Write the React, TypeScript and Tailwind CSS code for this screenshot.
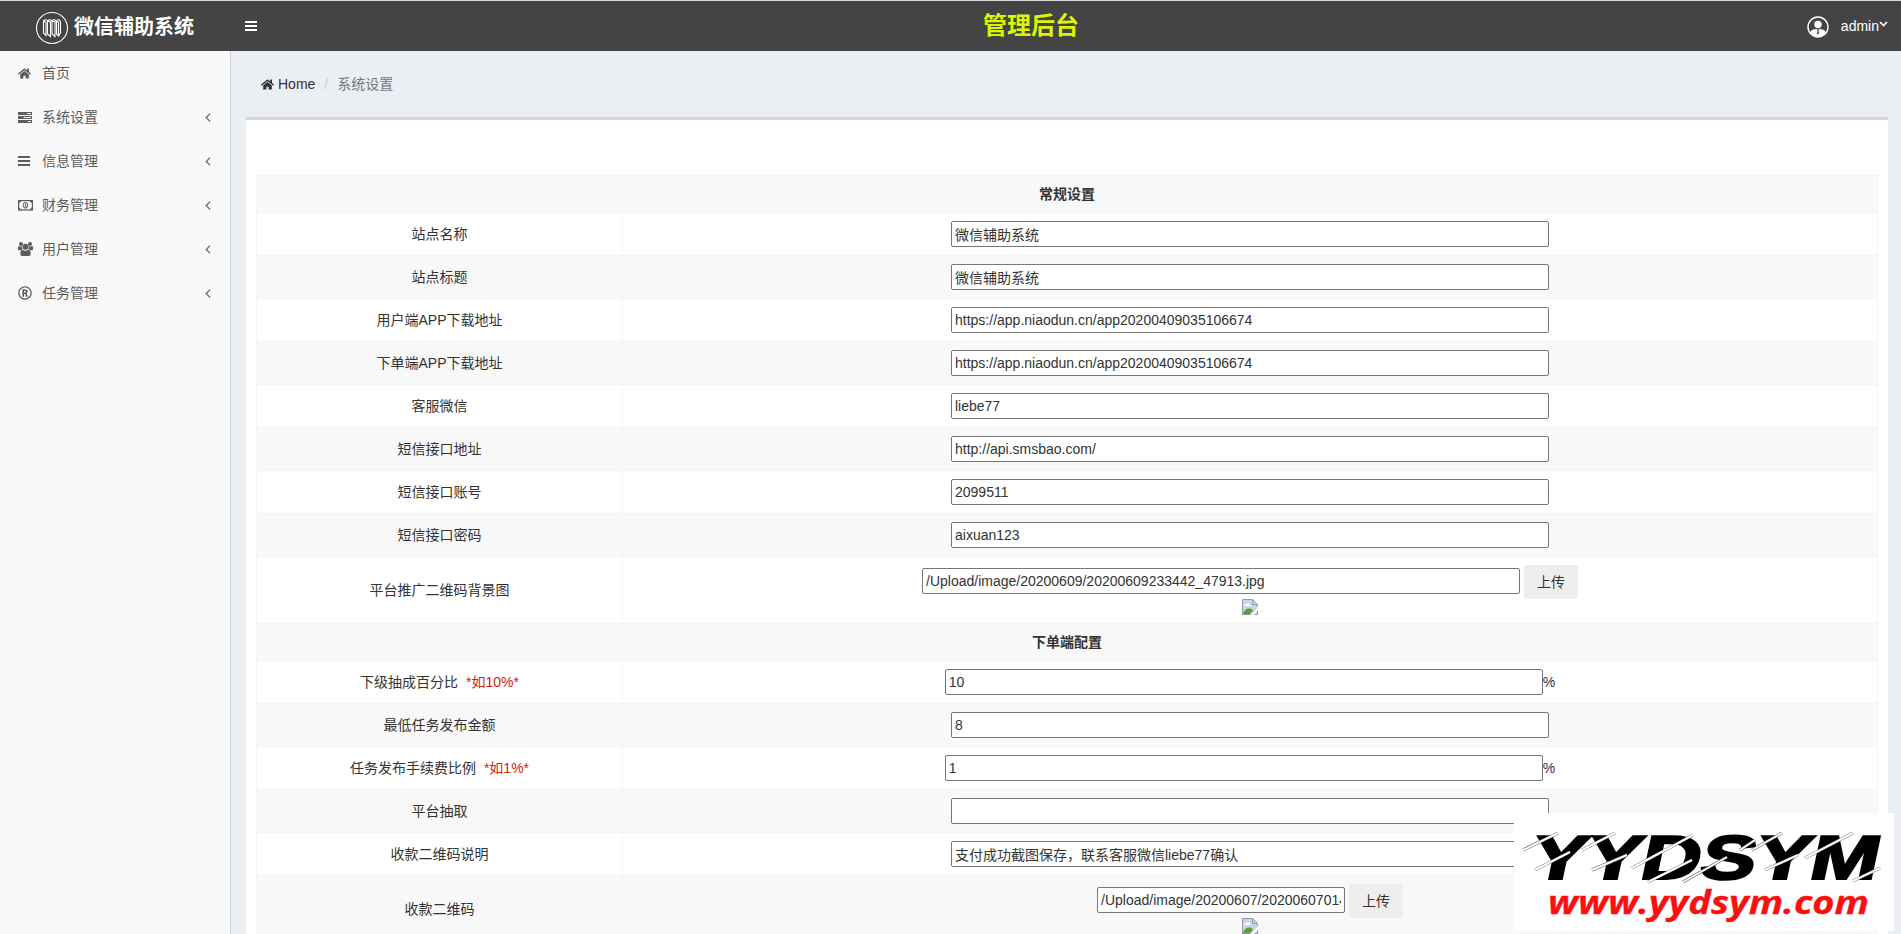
import { FaHome, FaRegRegistered } from "react-icons/fa";
import { ReactNode } from "react";

export type MenuEntry = {
    name: string;
    icon: ReactNode;
    children: boolean;
}

export type SettingRow = {
    label: string;
    hint?: string;
    value?: string;
    kind: "title" | "text" | "percent" | "upload" | "uploadSmall";
}

function BarsIcon() {
    return (
        <svg width="12" height="10" viewBox="0 0 12 10" fill="currentColor">
            <path d="M0 0h12v2H0zM0 4h12v2H0zM0 8h12v2H0z"/>
        </svg>
    );
}

function TasksIcon() {
    return (
        <svg width="14" height="11" viewBox="0 0 14 11" fill="currentColor">
            <path d="M0 0h14v3H0zM0 4h14v3H0zM0 8h14v3H0z"/>
            <path d="M9 1h4v1H9zM5.500 5H13v1H5.500zM10 9h3v1h-3z" fill="#f9f9f9"/>
        </svg>
    );
}

function MoneyIcon() {
    return (
        <svg width="15" height="11" viewBox="0 0 15 11" fill="none" stroke="currentColor">
            <rect x="0.6" y="0.6" width="13.8" height="9.4" strokeWidth="1.2"/>
            <path d="M1 1h2L1 3zM12 1h2v2zM1 9.600V7.600l2 2zM14 9.600h-2l2-2z" fill="currentColor" strokeWidth="0.6"/>
            <ellipse cx="7.5" cy="5.3" rx="2.3" ry="2.9"/>
            <path d="M6.800 4.300l.8-.5v3M6.500 6.900h2.200" strokeWidth="0.9"/>
        </svg>
    );
}

function GroupIcon() {
    return (
        <svg width="15" height="14" viewBox="0 0 15 14" fill="currentColor">
            <circle cx="3" cy="2" r="2"/>
            <circle cx="12" cy="2" r="2"/>
            <path d="M0 7.500V5.500q0-1.600 1-1.600 1.800 1 3 .4-.2 2 .9 2.900-1.300 0-2 1H1q-1 0-1-.7zM15 7.500V5.500q0-1.600-1-1.600-1.800 1-3 .4.2 2-.9 2.900 1.300 0 2 1H14q1 0 1-.7z"/>
            <circle cx="7.5" cy="4.800" r="3"/>
            <path d="M2.300 12q0-4.300 2.200-4.300 3 2 6 0 2.200 0 2.200 4.300 0 2-1.800 2H4.100q-1.800 0-1.800-2z"/>
        </svg>
    );
}

function AngleIcon() {
    return (
        <svg width="6" height="9" viewBox="0 0 6 9" fill="none" stroke="currentColor" strokeWidth="1.1">
            <path d="M5 .7L1.200 4.500 5 8.300"/>
        </svg>
    );
}

const menu: MenuEntry[] = [
    {name: "首页", icon: <FaHome size={13}/>, children: false},
    {name: "系统设置", icon: <TasksIcon/>, children: true},
    {name: "信息管理", icon: <BarsIcon/>, children: true},
    {name: "财务管理", icon: <MoneyIcon/>, children: true},
    {name: "用户管理", icon: <GroupIcon/>, children: true},
    {name: "任务管理", icon: <FaRegRegistered size={14}/>, children: true},
];

const rows: SettingRow[] = [
    {label: "常规设置", kind: "title"},
    {label: "站点名称", value: "微信辅助系统", kind: "text"},
    {label: "站点标题", value: "微信辅助系统", kind: "text"},
    {label: "用户端APP下载地址", value: "https://app.niaodun.cn/app20200409035106674", kind: "text"},
    {label: "下单端APP下载地址", value: "https://app.niaodun.cn/app20200409035106674", kind: "text"},
    {label: "客服微信", value: "liebe77", kind: "text"},
    {label: "短信接口地址", value: "http://api.smsbao.com/", kind: "text"},
    {label: "短信接口账号", value: "2099511", kind: "text"},
    {label: "短信接口密码", value: "aixuan123", kind: "text"},
    {label: "平台推广二维码背景图", value: "/Upload/image/20200609/20200609233442_47913.jpg", kind: "upload"},
    {label: "下单端配置", kind: "title"},
    {label: "下级抽成百分比", hint: "*如10%*", value: "10", kind: "percent"},
    {label: "最低任务发布金额", value: "8", kind: "text"},
    {label: "任务发布手续费比例", hint: "*如1%*", value: "1", kind: "percent"},
    {label: "平台抽取", value: "", kind: "text"},
    {label: "收款二维码说明", value: "支付成功截图保存，联系客服微信liebe77确认", kind: "text"},
    {label: "收款二维码", value: "/Upload/image/20200607/20200607014512_83120.jpg", kind: "uploadSmall"},
];

function BrokenImage() {
    return (
        <svg width="16" height="16" viewBox="0 0 16 16" className="block">
            <path d="M0.500 0.500h10l5 5v10H.5z" fill="#c3d6ee"/>
            <path d="M2 7c0-2 2-2 2.500-1.500C5 3.500 8 4 8 6c1 0 1 1 .5 1z" fill="#fff"/>
            <path d="M1 15c1-4 4-6 7-5.500 2 .5 3 2 3 2L8 15z" fill="#5aa02c"/>
            <path d="M.5 16V.5h10l5 5V8M10.500.5v5h5M.5 15.500h8M12.500 15.500h3V12" fill="none" stroke="#9a9a9a"/>
            <path d="M16 8.500L9 16h2.500l4.500-4.500z" fill="#fff"/>
        </svg>
    );
}

function Field({row}: { row: SettingRow }) {
    const box = "h-[26px] rounded-[2px] border border-[#767676] bg-white px-[3px] text-sm text-[#333] outline-none";

    if (row.kind === "upload" || row.kind === "uploadSmall") {
        return (
            <div className="flex flex-col items-center">
                <div className="flex gap-1">
                    <input
                        className={`${box} mt-[3px] ${row.kind === "upload" ? "w-[598px]" : "w-[248px]"}`}
                        defaultValue={row.value}
                    />
                    <button className="h-[34px] w-[54px] rounded-[3px] bg-[#eee] text-sm text-[#333]">上传</button>
                </div>
                <BrokenImage/>
            </div>
        );
    }
    return (
        <div className="flex items-center justify-center">
            <input className={`${box} w-[598px]`} defaultValue={row.value}/>
            {row.kind === "percent" && <span>%</span>}
        </div>
    );
}

function SettingLine({row, striped}: { row: SettingRow, striped: boolean }) {
    const bg = striped ? "bg-[#f8f8f8]" : "bg-white";

    if (row.kind === "title") {
        return (
            <div className={`flex h-[37px] items-center justify-center border-t border-[#f4f4f4] font-bold ${bg}`}>
                {row.label}
            </div>
        );
    }
    const height = row.kind === "text" || row.kind === "percent" ? "h-[43px]" : "h-[67px]";
    return (
        <div className={`flex border-t border-[#f4f4f4] ${height} ${bg}`}>
            <div className="flex w-[365px] items-center justify-center">
                {row.label}
                {row.hint && <span className="ml-2 text-[#d3200f]">{row.hint}</span>}
            </div>
            <div className="flex-1 border-l border-[#f4f4f4] pt-2">
                <Field row={row}/>
            </div>
        </div>
    );
}

function Header() {
    return (
        <div className="relative flex h-[51px] items-center border-t border-[#d3d8d6] bg-[#444] text-white">
            <div className="flex w-[230px] items-center gap-[5px] pl-[35px]">
                <svg width="34" height="34" viewBox="0 0 34 34" fill="none" stroke="#fff" className="mt-[3px]">
                    <circle cx="17" cy="17" r="15.500" strokeWidth="1.1"/>
                    {/* four folded strips that form the emblem */}
                    <path
                        d="M8.500 10V22l2.500 2.500V11.500zq2-2.500 4 0M12.500 10V23l3 2.500V11zq2-2.500 4 0M17 10V23l3 2.500V11zq2-2.500 4 0M21.500 10V23l2 2V11zM22 9q3-1 3.500 2V22L23.500 25"
                        strokeWidth="1.1"
                    />
                </svg>
                <span className="mt-[2px] text-xl font-bold leading-none">微信辅助系统</span>
            </div>
            <div className="ml-[15px]"><BarsIcon/></div>
            <div className="absolute left-[983px] top-[9px] text-2xl font-bold leading-8 text-[#dcf406]">管理后台</div>
            <div className="ml-auto flex items-center pr-[13px]">
                <svg width="22" height="22" viewBox="0 0 22 22" className="mt-[2px]">
                    <circle cx="11" cy="11" r="10" fill="none" stroke="#fff" strokeWidth="1.4"/>
                    <circle cx="11" cy="8.500" r="3.700" fill="#fff"/>
                    <path d="M3 16.500c1-3 4-3.200 6-3.500l2 .8 2-.8c2 .3 5 .5 6 3.500-2 3.500-5 4.500-8 4.500s-6-1-8-4.500z" fill="#fff"/>
                    <path d="M10 13.500h2l-.5 1.200.5 2.800-1 1-1-1 .5-2.800z" fill="#444"/>
                </svg>
                <span className="ml-3 text-sm">admin</span>
                <svg width="9" height="6" viewBox="0 0 9 6" className="mb-[5px]" fill="none" stroke="#fff" strokeWidth="1.600">
                    <path d="M1 1l3.500 3.500L8 1"/>
                </svg>
            </div>
        </div>
    );
}

// slash marks that cut through the letters
const slashes = "M9 37L44 20M21 57L56 39M68 37L101 20M78 57L113 42M118 55L179 22M134 69L178 47M169 69L213 44M226 37L241 27M238 37L268 20M251 57L284 42M291 45L339 20M339 68L366 55";

function Watermark() {
    return (
        <div className="absolute left-[1514px] top-[813px] h-[118px] w-[380px] bg-white">
            <svg width="380" height="118" viewBox="0 0 380 118">
                <text x="12" y="0" textLength="348" lengthAdjust="spacingAndGlyphs" transform="translate(2 66) skewX(-12)"
                      className="font-['Liberation_Sans'] font-bold" fontSize="62" fill="#000" stroke="#000"
                      strokeWidth="2.200">YYDSYM</text>
                <path d={slashes} stroke="#555" strokeWidth="3"/>
                <path d={slashes} stroke="#fff" strokeWidth="2"/>
                <text x="34" y="101" textLength="321" lengthAdjust="spacingAndGlyphs"
                      className="font-['Open_Sans'] font-bold italic" fontSize="32" fill="#fb1010" stroke="#fb1010"
                      strokeWidth="0.300">www.yydsym.com</text>
            </svg>
        </div>
    );
}

function App() {
    return (
        <div className="relative h-[934px] w-full overflow-hidden bg-[#ebeef3] font-['Liberation_Sans','Noto_Sans_CJK_SC',sans-serif] text-sm text-[#333]">
            <Header/>
            <div className="flex h-[883px]">
                <div className="w-[231px] border-r border-[#d2d6de] bg-[#f9f9f9] text-[#5c5c5c]">
                    {menu.map(entry => (
                        <div key={entry.name} className="flex h-11 items-center pl-[18px] pr-[19px]">
                            <span className="w-6">{entry.icon}</span>
                            <span className="flex-1">{entry.name}</span>
                            {entry.children && <AngleIcon/>}
                        </div>
                    ))}
                </div>
                <div className="flex-1 pl-[15px] pr-[13px]">
                    <div className="flex h-[66px] items-center pl-[15px]">
                        <FaHome size={13}/>
                        <span className="ml-1">Home</span>
                        <span className="mx-[9px] text-[#ccc]">/</span>
                        <span className="text-[#777]">系统设置</span>
                    </div>
                    <div className="h-[830px] border-t-3 border-[#d3d6db] bg-white px-[10px] pt-[55px]">
                        <div className="border-x border-[#f4f4f4]">
                            {rows.map((row, i) => <SettingLine key={row.label} row={row} striped={i % 2 === 0}/>)}
                        </div>
                    </div>
                </div>
            </div>
            <Watermark/>
        </div>
    );
}

export default App;
